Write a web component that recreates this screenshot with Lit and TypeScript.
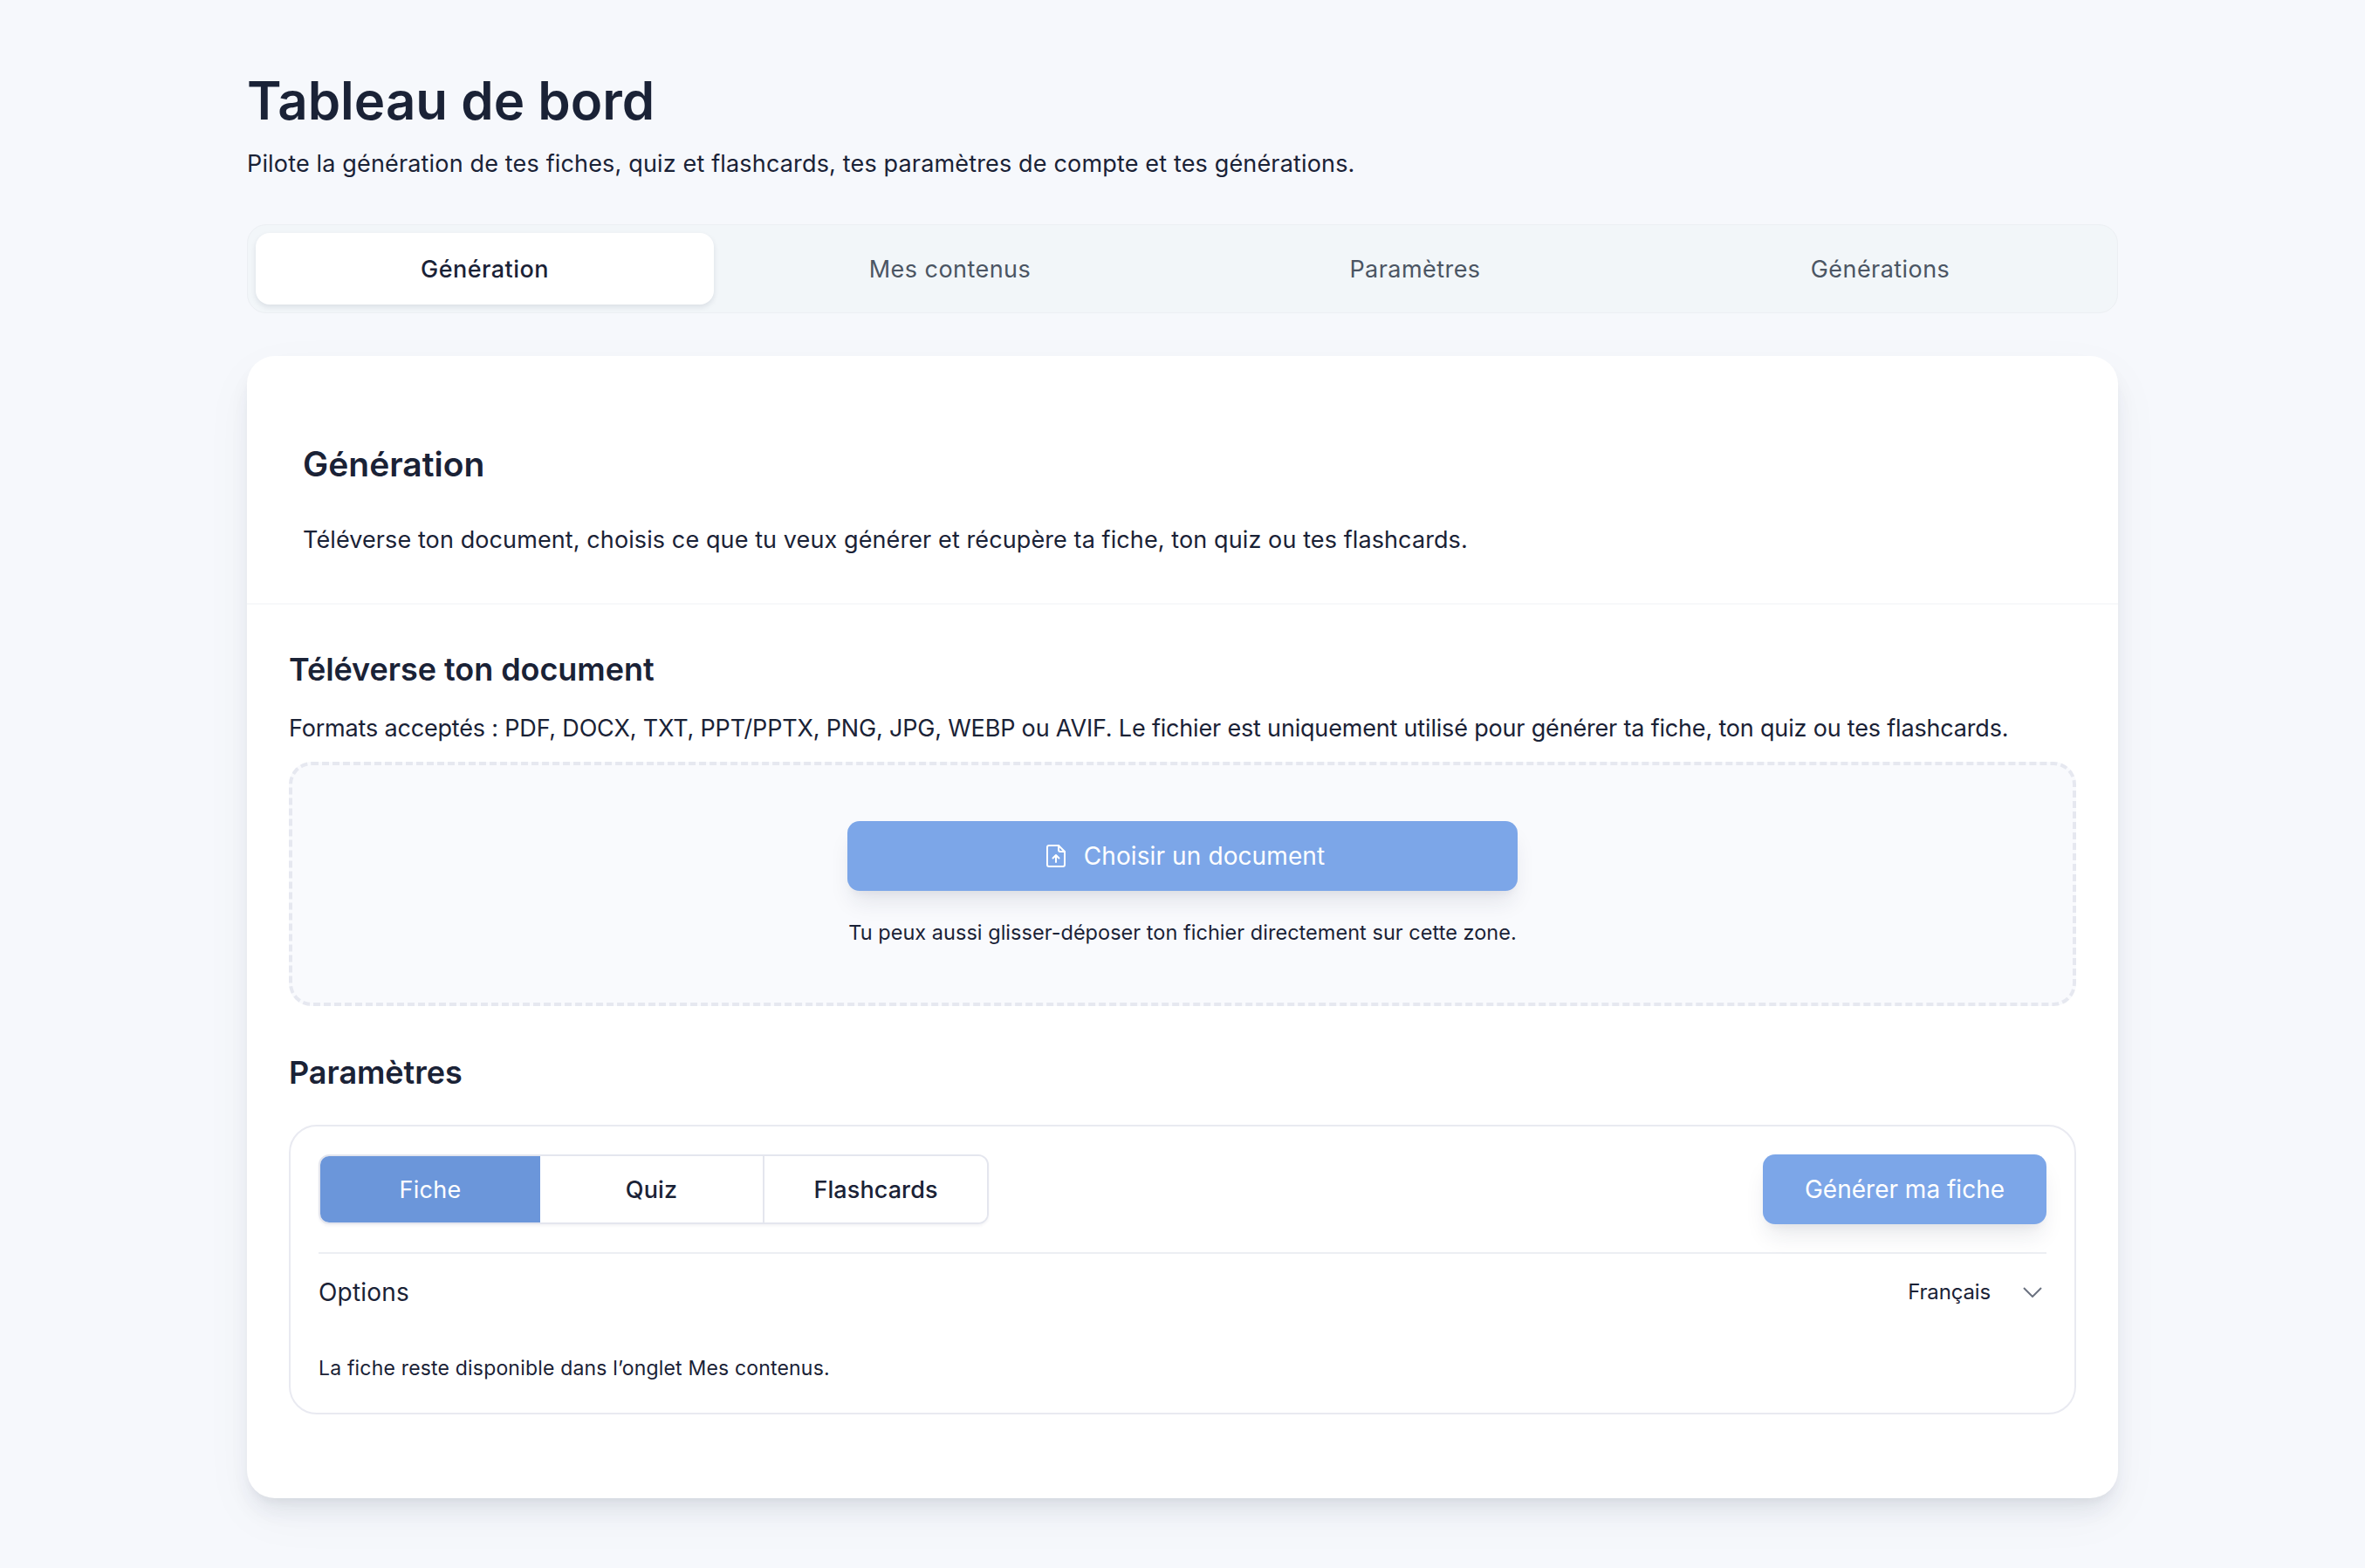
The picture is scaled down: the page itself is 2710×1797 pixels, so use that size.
import { LitElement, html, css } from 'lit';
import { customElement, state } from 'lit/decorators.js';

@customElement('app-root')
export class AppRoot extends LitElement {
  @state() tab = 'Génération';
  @state() kind = 'Fiche';

  static styles = css`
    :host {
      display: block;
      min-height: 1797px;
      background: #f6f8fc;
      color: #1a2236;
      font-family: Inter, 'Liberation Sans', sans-serif;
      font-size: 27px;
    }
    .page { width: 2144px; margin: 0 auto; padding-top: 78px; }
    h1 { margin: 0; font-size: 60px; line-height: 74px; font-weight: 600; }
    .lead { margin: 16px 0 49px; line-height: 40px; letter-spacing: 0.16px; }
    .tabs {
      display: grid;
      grid-template-columns: repeat(4, 1fr);
      gap: 8px;
      padding: 9px;
      height: 102px;
      box-sizing: border-box;
      border: 1px solid #eceff3;
      border-radius: 22px;
      background: #f2f6f9;
      margin-bottom: 49px;
    }
    .tab {
      border: 0;
      background: none;
      border-radius: 16px;
      font: inherit;
      letter-spacing: 0.45px;
      color: #4b5563;
      cursor: pointer;
    }
    .tab.active { background: #fff; color: #1a2236; font-weight: 500; box-shadow: 0 3px 6px rgba(20, 30, 60, 0.1); }
    .card {
      background: #fff;
      border-radius: 32px;
      padding-bottom: 96px;
      box-shadow: 0 17px 26px -5px rgba(30, 40, 70, 0.09), 0 7px 10px -4px rgba(30, 40, 70, 0.05), 0 20px 60px rgba(30, 40, 70, 0.04);
    }
    .head { padding: 99px 64px 52px; border-bottom: 2px solid #f7f8fa; }
    h2 { margin: 0; font-size: 39px; line-height: 50px; font-weight: 600; }
    .head p { margin: 42px 0 0; line-height: 40px; letter-spacing: 0.1px; }
    .body { padding: 52px 48px 0; }
    h3 { margin: 0; font-size: 36px; line-height: 44px; font-weight: 600; letter-spacing: -0.05px; }
    .formats { margin: 26px 0 18px; line-height: 40px; letter-spacing: -0.18px; }
    .drop {
      border: 4px dashed #e6e8f0;
      border-radius: 26px;
      background: #f9fafd;
      padding: 64px 0 62px;
      display: flex;
      flex-direction: column;
      align-items: center;
    }
    .btn {
      border: 0;
      border-radius: 14px;
      height: 80px;
      background: #7ca6e8;
      color: #fff;
      font: inherit;
      font-size: 28px;
      box-shadow: 0 17px 26px -5px rgba(30, 40, 70, 0.1), 0 7px 10px -4px rgba(30, 40, 70, 0.05);
      display: flex;
      align-items: center;
      justify-content: center;
      cursor: pointer;
    }
    .choose { width: 768px; gap: 21px; padding-left: 13px; letter-spacing: 0.1px; }
    .drop p { margin: 30px 0 0; font-size: 23.5px; line-height: 36px; letter-spacing: 0.03px; }
    .params { margin: 54px 0 38px; }
    .panel { border: 2px solid #e9eaf1; border-radius: 32px; padding: 32px 32px 34px; }
    .top { display: flex; justify-content: space-between; align-items: flex-start; }
    .seg {
      display: flex;
      border: 2px solid #e4e6ee;
      border-radius: 12px;
      overflow: hidden;
      box-shadow: 0 2px 3px rgba(30, 40, 70, 0.05);
    }
    .seg button {
      width: 257px;
      height: 76px;
      border: 0;
      border-right: 2px solid #e4e6ee;
      background: #fff;
      color: #1a2236;
      font: inherit;
      font-weight: 500;
      letter-spacing: 0.1px;
      cursor: pointer;
    }
    .seg button:last-child { border-right: 0; width: 255px; }
    .seg button.on { background: #6b96da; color: #fff; border-right: 0; width: 252px; font-weight: 400; letter-spacing: 0.3px; }
    .generate { width: 325px; }
    .rule { height: 2px; margin-top: 32px; background: #eceef3; }
    .options { display: flex; justify-content: space-between; align-items: center; margin-top: 26px; line-height: 36px; }
    .options > span { font-size: 28px; letter-spacing: 0.2px; }
    .lang { display: flex; align-items: center; gap: 37px; padding-right: 5px; font-size: 24px; letter-spacing: -0.15px; }
    .note { margin: 52px 0 0; font-size: 23px; line-height: 34px; letter-spacing: 0.18px; }
  `;

  render() {
    const tabs = ['Génération', 'Mes contenus', 'Paramètres', 'Générations'];
    const kinds = ['Fiche', 'Quiz', 'Flashcards'];
    return html`
      <div class="page">
        <h1>Tableau de bord</h1>
        <p class="lead">Pilote la génération de tes fiches, quiz et flashcards, tes paramètres de compte et tes générations.</p>
        <div class="tabs">
          ${tabs.map((t) => html`
            <button class="tab ${t === this.tab ? 'active' : ''}" @click=${() => { this.tab = t; }}>${t}</button>
          `)}
        </div>
        <section class="card">
          <div class="head">
            <h2>Génération</h2>
            <p>Téléverse ton document, choisis ce que tu veux générer et récupère ta fiche, ton quiz ou tes flashcards.</p>
          </div>
          <div class="body">
            <h3>Téléverse ton document</h3>
            <p class="formats">Formats acceptés : PDF, DOCX, TXT, PPT/PPTX, PNG, JPG, WEBP ou AVIF. Le fichier est uniquement utilisé pour générer ta fiche, ton quiz ou tes flashcards.</p>
            <div class="drop">
              <button class="btn choose">
                <svg width="22" height="26" viewBox="0 0 22 26" fill="none" stroke="currentColor" stroke-width="2" stroke-linejoin="round" stroke-linecap="round">
                  <path d="M3 1h11l7 7v15a2 2 0 0 1-2 2H3a2 2 0 0 1-2-2V3a2 2 0 0 1 2-2Z" />
                  <path d="M14 1v5a2 2 0 0 0 2 2h5" />
                  <path d="M11 20v-8M7.5 15.5L11 12l3.5 3.5" />
                </svg>
                Choisir un document
              </button>
              <p>Tu peux aussi glisser-déposer ton fichier directement sur cette zone.</p>
            </div>
            <h3 class="params">Paramètres</h3>
            <div class="panel">
              <div class="top">
                <div class="seg">
                  ${kinds.map((k) => html`
                    <button class="${k === this.kind ? 'on' : ''}" @click=${() => { this.kind = k; }}>${k}</button>
                  `)}
                </div>
                <button class="btn generate">Générer ma fiche</button>
              </div>
              <div class="rule"></div>
              <div class="options">
                <span>Options</span>
                <div class="lang">
                  Français
                  <svg width="22" height="12" viewBox="0 0 22 12" fill="none" stroke="#6b7280" stroke-width="2">
                    <path d="M1 1l10 10L21 1" />
                  </svg>
                </div>
              </div>
              <p class="note">La fiche reste disponible dans l’onglet Mes contenus.</p>
            </div>
          </div>
        </section>
      </div>
    `;
  }
}
